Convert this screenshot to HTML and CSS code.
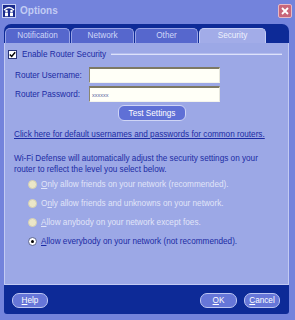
FILE: index.html
```html
<!DOCTYPE html>
<html lang="en">
<head>
    <meta charset="UTF-8">
    <title>Options</title>
    <link rel="stylesheet" href="styles.css">
</head>
<body>
    <div class="titlebar">
        <svg class="app-icon" width="14" height="14" viewBox="0 0 14 14">
            <rect x="0.5" y="0.5" width="13" height="13" fill="#1a2a8c" stroke="#c8d0f4"/>
            <path d="M2 6 Q7 1 12 6" fill="none" stroke="#fff" stroke-width="1.4"/>
            <circle cx="4.5" cy="7" r="1.3" fill="#fff"/>
            <circle cx="9.5" cy="7" r="1.3" fill="#fff"/>
            <rect x="3" y="8.6" width="3" height="3.6" fill="#fff"/>
            <rect x="8" y="8.6" width="3" height="3.6" fill="#fff"/>
        </svg>
        <span class="title">Options</span>
        <span class="close">
            <svg width="14" height="14" viewBox="0 0 14 14">
                <rect x="0.5" y="0.5" width="13" height="13" rx="1.5" fill="#c8667a" stroke="#e6b8c6"/>
                <path d="M4 4 L10 10 M10 4 L4 10" stroke="#fff" stroke-width="1.8"/>
            </svg>
        </span>
    </div>

    <div class="frame">
        <div class="tabs">
            <div class="tab tab-notification">Notification</div>
            <div class="tab tab-network">Network</div>
            <div class="tab tab-other">Other</div>
            <div class="tab tab-security active">Security</div>
        </div>

        <div class="panel">
            <div class="enable">
                <span class="check">
                    <svg width="7" height="7" viewBox="0 0 7 7">
                        <path d="M0.8 3.4 L2.7 5.4 L6.2 1.2" fill="none" stroke="#000" stroke-width="1.4"/>
                    </svg>
                </span>
                <span class="enable-label">Enable Router Security</span>
                <span class="rule"></span>
            </div>

            <div class="field first">
                <label>Router Username:</label>
                <span class="input"></span>
            </div>
            <div class="field">
                <label>Router Password:</label>
                <span class="input"><span class="mask">xxxxxx</span></span>
            </div>

            <button class="btn test-btn">Test Settings</button>

            <a class="link" href="#">Click here for default usernames and passwords for common routers.</a>

            <p class="info">Wi-Fi Defense will automatically adjust the security settings on your<br>router to reflect the level you select below.</p>

            <ul class="levels">
                <li class="level disabled"><span class="dot"></span><span><u>O</u>nly allow friends on your network (recommended).</span></li>
                <li class="level disabled"><span class="dot"></span><span>O<u>n</u>ly allow friends and unknowns on your network.</span></li>
                <li class="level disabled"><span class="dot"></span><span><u>A</u>llow anybody on your network except foes.</span></li>
                <li class="level selected"><span class="dot"></span><span><u>A</u>llow everybody on your network (not recommended).</span></li>
            </ul>
        </div>

        <div class="footer">
            <button class="btn foot-btn"><u>H</u>elp</button>
            <button class="btn foot-btn ok"><u>O</u>K</button>
            <button class="btn foot-btn"><u>C</u>ancel</button>
        </div>
    </div>
</body>
</html>
```

FILE: styles.css
```css
body {
    margin: 0;
    width: 295px;
    height: 320px;
    overflow: hidden;
    background-color: #7383dc;
    font-family: "Liberation Sans", Arial, sans-serif;
    font-size: 8.2px;
}

.titlebar {
    display: flex;
    align-items: center;
    height: 24px;
    padding: 0 3px 3px 2px;
    box-sizing: border-box;
}
.app-icon {
    display: block;
}
.title {
    margin-left: 4px;
    font-size: 10px;
    font-weight: bold;
    color: #c2ccf4;
}
.close {
    margin-left: auto;
    display: flex;
}

.frame {
    margin: 0 6px 0 4px;
    height: 290px;
    padding-top: 4px;
    box-sizing: border-box;
    background-color: #0d2a97;
    border-radius: 7px 7px 3px 3px;
    display: flex;
    flex-direction: column;
}

.tabs {
    display: flex;
    gap: 1px;
    height: 15px;
    padding-left: 1px;
}
.tab {
    box-sizing: border-box;
    height: 15px;
    line-height: 14px;
    text-align: center;
    color: #cfd6f8;
    background-color: #5667cd;
    border: 1px solid #98a3e6;
    border-bottom: none;
    border-radius: 5px 5px 0 0;
}
.tab-notification { width: 65px; }
.tab-network { width: 63px; }
.tab-other { width: 63px; }
.tab-security { width: 67px; }
.tab.active {
    background-color: #a2ace8;
    color: #eef1fd;
    border-color: #c4ccf4;
}

.panel {
    height: 242px;
    box-sizing: border-box;
    background-color: #9ca8e6;
    border: 1px solid #c2caf3;
    border-top: none;
    color: #1b2ba4;
}

.enable {
    display: flex;
    align-items: center;
    height: 10px;
    margin: 6px 6px 0 3px;
}
.check {
    width: 9px;
    height: 9px;
    box-sizing: border-box;
    background-color: #fff;
    border: 1px solid #2a3578;
    display: flex;
    align-items: center;
    justify-content: center;
}
.check svg {
    display: block;
}
.enable-label {
    margin-left: 5px;
}
.rule {
    flex: 1;
    margin-left: 5px;
    border-top: 1px solid #b4bdee;
    border-bottom: 1px solid #dde2fa;
}

.field {
    display: flex;
    align-items: center;
    margin-top: 3px;
    padding-left: 10px;
}
.field.first {
    margin-top: 8px;
}
.field label {
    width: 74px;
}
.input {
    width: 131px;
    height: 16px;
    box-sizing: border-box;
    background-color: #fffff7;
    border-top: 2px solid #7d7964;
    border-left: 1px solid #8a8670;
    border-right: 1px solid #e6e6dc;
    border-bottom: 1px solid #f4f4ec;
    display: flex;
    align-items: center;
    padding-left: 2px;
}
.mask {
    font-size: 5.5px;
    color: #55609c;
}

.btn {
    font-family: inherit;
    font-size: 8.2px;
    color: #fff;
    background-color: #5f70d6;
    border: 1px solid #cfd5f6;
    padding: 0;
    box-sizing: border-box;
}
.test-btn {
    display: block;
    margin: 3px 0 0 113px;
    width: 68px;
    height: 16px;
    border-radius: 6px;
}

.link {
    display: block;
    margin: 8px 0 0 9px;
    line-height: 11px;
    color: #1b2ba4;
}

.info {
    margin: 13px 0 0 9px;
    line-height: 11px;
}

.levels {
    list-style: none;
    margin: 0;
    padding: 0 0 0 23px;
}
.level {
    display: flex;
    align-items: center;
    height: 19px;
}
.dot {
    width: 9px;
    height: 9px;
    box-sizing: border-box;
    border-radius: 50%;
    margin-right: 4px;
    display: flex;
    align-items: center;
    justify-content: center;
}
.disabled {
    color: #e0e4f8;
}
.disabled .dot {
    background-color: #ebe6c8;
    border: 1px solid #d6d1b2;
}
.selected .dot {
    background-color: #fff;
    border: 1px solid #5a6490;
}
.selected .dot::after {
    content: "";
    width: 3px;
    height: 3px;
    border-radius: 50%;
    background-color: #000;
}

.footer {
    display: flex;
    align-items: flex-start;
    gap: 7px;
    height: 29px;
    box-sizing: border-box;
    padding: 8px 9px 0 8px;
}
.foot-btn {
    width: 36px;
    height: 15px;
    border-radius: 7px;
    background-color: #6676d8;
    border-color: #bcc5f3;
}
.foot-btn.ok {
    margin-left: auto;
    width: 37px;
}
```
